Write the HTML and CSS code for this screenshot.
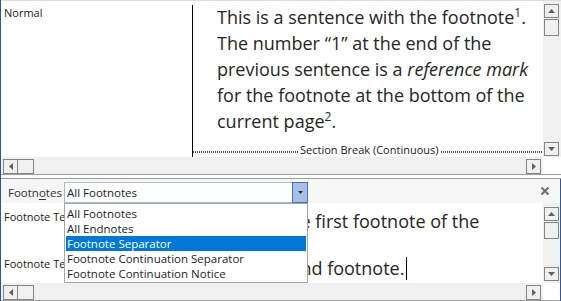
FILE: index.html
```html
<!DOCTYPE html>
<html>
<head>
<meta charset="utf-8">
<link rel="stylesheet" href="styles.css">
</head>
<body>
<div class="app">
  <section class="pane-top">
    <div class="pane-body top-body">
      <div class="doc">
        <div class="style-col">
          <div class="style-name">Normal</div>
        </div>
        <div class="text-col">
          <p class="para">This is a sentence with the footnote<sup class="ref">1</sup>.<br>The number “1” at the end of the<br>previous sentence is a <em>reference mark</em><br>for the footnote at the bottom of the<br>current page<sup class="ref">2</sup>.</p>
          <div class="section-break">
            <span class="dots dots-left"></span>
            <span class="sb-label">Section Break (Continuous)</span>
            <span class="dots dots-right"></span>
          </div>
        </div>
      </div>
      <div class="vscroll">
        <div class="sbox sbox-v"><svg width="7" height="4" viewBox="0 0 7 4"><path d="M0 4H7L3.5 0Z" fill="#606060"/></svg></div>
        <div class="sthumb-v"></div>
        <div class="sbox sbox-v sbox-end"><svg width="7" height="4" viewBox="0 0 7 4"><path d="M0 0H7L3.5 4Z" fill="#606060"/></svg></div>
      </div>
    </div>
    <div class="hscroll">
      <div class="htrack">
        <div class="sbox sbox-h"><svg width="4" height="7" viewBox="0 0 4 7"><path d="M4 0V7L0 3.5Z" fill="#606060"/></svg></div>
        <div class="sthumb-h"></div>
        <div class="sbox sbox-h sbox-right"><svg width="4" height="7" viewBox="0 0 4 7"><path d="M0 0V7L4 3.5Z" fill="#606060"/></svg></div>
      </div>
      <div class="corner"></div>
    </div>
  </section>

  <div class="splitter"></div>

  <section class="pane-notes">
    <div class="notes-header">
      <span class="notes-label">Footn<u>o</u>tes</span>
      <div class="select">
        <span class="select-value">All Footnotes</span>
        <span class="select-btn"><svg width="5" height="3" viewBox="0 0 5 3"><path d="M0 0H5L2.5 3Z" fill="#333"/></svg></span>
      </div>
      <span class="close"><svg width="8" height="8" viewBox="0 0 8 8"><path d="M0.5 0.5L7.5 7.5M7.5 0.5L0.5 7.5" stroke="#6e6e6e" stroke-width="2"/></svg></span>
    </div>
    <div class="pane-body notes-body">
      <div class="doc">
        <div class="style-col notes-styles">
          <div class="style-name">Footnote Text</div>
          <div class="style-name second">Footnote Text</div>
        </div>
        <div class="text-col notes-text">
          <p class="note"><sup class="ref">1</sup> This is the first footnote of the<br>document.</p>
          <p class="note"><sup class="ref">2</sup> The second footnote.<span class="caret"></span></p>
        </div>
      </div>
      <div class="vscroll notes-vscroll">
        <div class="sbox sbox-v"><svg width="7" height="4" viewBox="0 0 7 4"><path d="M0 4H7L3.5 0Z" fill="#606060"/></svg></div>
        <div class="sthumb-v"></div>
        <div class="sbox sbox-v sbox-end"><svg width="7" height="4" viewBox="0 0 7 4"><path d="M0 0H7L3.5 4Z" fill="#606060"/></svg></div>
      </div>
    </div>
    <div class="hscroll notes-hscroll">
      <div class="htrack">
        <div class="sbox sbox-h"><svg width="4" height="7" viewBox="0 0 4 7"><path d="M4 0V7L0 3.5Z" fill="#606060"/></svg></div>
        <div class="sthumb-h"></div>
        <div class="sbox sbox-h sbox-right"><svg width="4" height="7" viewBox="0 0 4 7"><path d="M0 0V7L4 3.5Z" fill="#606060"/></svg></div>
      </div>
      <div class="corner notes-corner"></div>
    </div>
  </section>

  <ul class="dropdown">
    <li class="item">All Footnotes</li>
    <li class="item">All Endnotes</li>
    <li class="item selected">Footnote Separator</li>
    <li class="item">Footnote Continuation Separator</li>
    <li class="item">Footnote Continuation Notice</li>
  </ul>
</div>
</body>
</html>
```

FILE: styles.css
```css
* { box-sizing: border-box; }
html, body {
  margin: 0;
  width: 561px;
  height: 301px;
  overflow: hidden;
  background: #fff;
}
body {
  font-family: "Open Sans", "Noto Sans", sans-serif;
  color: #222;
}
.app {
  position: relative;
  width: 561px;
  height: 301px;
  border-left: 1px solid #2b579a;
  display: flex;
  flex-direction: column;
}

/* top pane */
.pane-top {
  border-top: 1px solid #dcdcdc;
  display: flex;
  flex-direction: column;
}
.pane-body { display: flex; }
.top-body { height: 156px; }
.doc { flex: 1; display: flex; min-width: 0; }
.style-col {
  width: 191px;
  padding: 5px 0 0 3px;
  font-size: 11px;
  line-height: 13px;
  color: #222;
  white-space: nowrap;
  overflow: hidden;
}
.text-col {
  flex: 1;
  margin-top: 4px;
  border-left: 1px solid #000;
  padding-left: 24px;
  display: flex;
  flex-direction: column;
  min-width: 0;
}
.para {
  margin: -1px 0 0;
  font-size: 18px;
  line-height: 26px;
  color: #262626;
  white-space: nowrap;
}
.ref {
  font-size: 12px;
  line-height: 0;
  vertical-align: baseline;
  position: relative;
  top: -7px;
}
.section-break {
  margin: auto 1px 1px -24px;
  height: 12px;
  display: flex;
  align-items: center;
}
.dots {
  height: 2px;
  margin-top: 4px;
  border-top: 1px dotted #555;
  border-bottom: 1px dotted #555;
}
.dots-left { width: 105px; }
.dots-right { flex: 1; }
.sb-label {
  font-size: 11px;
  line-height: 12px;
  padding: 0 2px 0 2px;
  color: #222;
  white-space: nowrap;
}

/* scrollbars */
.vscroll {
  width: 18px;
  background: #f0f0f0;
  display: flex;
  flex-direction: column;
  padding: 3px 0 1px 1px;
}
.sbox {
  border: 1px solid #858585;
  display: flex;
  align-items: center;
  justify-content: center;
}
.sbox-v { width: 15px; height: 14px; }
.sbox-end { margin-top: auto; }
.sthumb-v {
  width: 15px;
  height: 17px;
  margin-top: 1px;
  border: 1px solid #858585;
}
.hscroll {
  height: 17px;
  display: flex;
}
.htrack {
  flex: 1;
  background: #f0f0f0;
  display: flex;
  padding: 2px 2px 0 2px;
}
.sbox-h { width: 15px; height: 15px; }
.sthumb-h {
  width: 17px;
  height: 15px;
  border: 1px solid #858585;
  margin-left: -1px;
}
.sbox-right { margin-left: auto; }
.corner { width: 18px; background: #fff; }

.splitter {
  height: 5px;
  border-top: 1px solid #9c9c9c;
  border-bottom: 1px solid #9c9c9c;
  background: #fff;
}

/* notes pane */
.pane-notes {
  flex: 1;
  display: flex;
  flex-direction: column;
  border-right: 1px solid #2b579a;
}
.notes-header {
  height: 24px;
  background: #f6f6f6;
  display: flex;
  align-items: flex-start;
  padding: 3px 11px 0 7px;
}
.notes-label {
  width: 56px;
  font-size: 11.5px;
  line-height: 21px;
  color: #333;
}
.notes-label u { text-underline-offset: 2px; }
.select {
  width: 244px;
  height: 21px;
  display: flex;
  background: #fff;
}
.select-value {
  flex: 1;
  border: 1px solid #a9b9cf;
  border-right: none;
  font-size: 11.5px;
  line-height: 19px;
  padding-left: 2px;
  color: #1e1e1e;
}
.select-btn {
  width: 16px;
  background: #a7c1e6;
  border: 1px solid #3e79b7;
  display: flex;
  align-items: center;
  justify-content: center;
}
.close {
  margin-left: auto;
  width: 8px;
  height: 8px;
  margin-top: 5px;
  display: flex;
}
.notes-body { height: 80px; }
.notes-styles { padding-top: 7px; }
.notes-styles .second { margin-top: 34px; }
.notes-text { margin-top: 0; padding-top: 7px; padding-left: 22px; }
.note {
  margin: 0;
  font-size: 18px;
  line-height: 23.5px;
  color: #262626;
  white-space: nowrap;
}
.caret {
  display: inline-block;
  width: 1px;
  height: 23px;
  background: #000;
  vertical-align: -5px;
  margin-left: 2px;
}
.notes-vscroll {
  width: 17px;
  padding: 4px 0 2px 1px;
}
.notes-hscroll {
  border-bottom: 1px solid #a0a0a0;
  height: 18px;
}
.notes-corner { width: 17px; }

/* dropdown list */
.dropdown {
  position: absolute;
  left: 63px;
  top: 203px;
  width: 244px;
  height: 80px;
  margin: 0;
  padding: 2px 1px 1px;
  list-style: none;
  background: #fff;
  border: 1px solid #a8a8a8;
}
.item {
  height: 15px;
  line-height: 15px;
  font-size: 11.5px;
  padding-left: 1px;
  color: #1e1e1e;
  white-space: nowrap;
}
.item.selected {
  background: #0078d7;
  color: #fff;
}
```
